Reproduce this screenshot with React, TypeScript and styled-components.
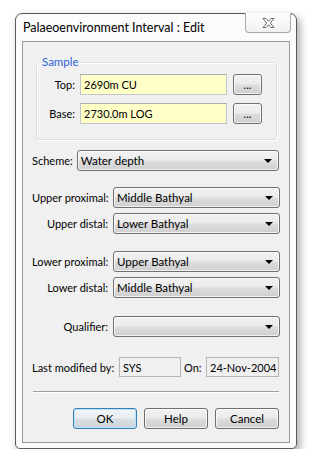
import { Fragment } from 'react';
import styled, { createGlobalStyle, css } from 'styled-components';

const GlobalStyle = createGlobalStyle`
  html, body {
    margin: 0;
    padding: 0;
    background: #ffffff;
  }
  body {
    font-family: Lato, "Liberation Sans", sans-serif;
    font-size: 11px;
    color: #000000;
  }
`;

const Window = styled.div`
  position: relative;
  box-sizing: border-box;
  width: 282px;
  height: 436px;
  margin: 13px 0 0 15px;
  border: 1px solid #5a5a5a;
  border-radius: 7px 7px 5px 5px;
  background: #fbfbfb;
  box-shadow: 3px 4px 9px rgba(0, 0, 0, 0.35);
  display: flex;
  flex-direction: column;
`;

const TitleBar = styled.div`
  height: 27px;
  display: flex;
  align-items: center;
  padding-left: 7px;
  font-size: 12.5px;
  color: #000;
`;

const CloseButton = styled.div`
  position: absolute;
  top: -1px;
  right: 5px;
  width: 46px;
  height: 20px;
  box-sizing: border-box;
  border: 1px solid #a8a8a8;
  border-top: none;
  border-radius: 0 0 4px 4px;
  background: linear-gradient(#fdfdfd, #f1f1f1);
  display: flex;
  align-items: center;
  justify-content: center;
`;

const Client = styled.div`
  flex: 1;
  margin: 0 6px 5px 6px;
  border: 1px solid #979797;
  background: #f0f0f0;
  padding: 0 10px 0 9px;
  display: flex;
  flex-direction: column;
`;

const GroupBox = styled.div`
  position: relative;
  margin: 20px 2px 0 4px;
  border: 1px solid #d5dfe5;
  border-radius: 3px;
  box-shadow: inset 1px 1px 0 #ffffff, 1px 1px 0 #ffffff;
  padding: 11px 0 15px 0;
  display: grid;
  grid-template-columns: 38px 147px 30px;
  column-gap: 5px;
  row-gap: 8px;
  align-items: center;
`;

const GroupCaption = styled.span`
  position: absolute;
  top: -8px;
  left: 4px;
  padding: 0 1px;
  background: #f0f0f0;
  color: #2f62d8;
  font-size: 11.5px;
`;

const Label = styled.label`
  white-space: nowrap;
  text-align: right;
`;

const fieldBase = css`
  box-sizing: border-box;
  height: 21px;
  display: flex;
  align-items: center;
  padding-left: 3px;
  white-space: nowrap;
  overflow: hidden;
`;

const TextField = styled.div<{ $readOnly?: boolean }>`
  ${fieldBase}
  border: 1px solid #c4c6cc;
  border-top-color: #abadb3;
  background: ${({ $readOnly }) => ($readOnly ? '#f0f0f0' : '#ffffc8')};
  ${({ $readOnly }) =>
    $readOnly &&
    css`
      height: 20px;
      border-color: #b5b5b5;
    `}
`;

const buttonFace = css`
  box-sizing: border-box;
  border: 1px solid #707070;
  border-radius: 3px;
  background: linear-gradient(#f2f2f2 0%, #ebebeb 48%, #dddddd 52%, #cfcfcf 100%);
  box-shadow: inset 0 0 0 1px rgba(255, 255, 255, 0.7);
`;

const EllipsisButton = styled.div`
  ${buttonFace}
  height: 21px;
  margin-left: 1px;
  display: flex;
  align-items: center;
  justify-content: center;
  font-size: 11px;
  padding-bottom: 1px;
`;

const Combo = styled.div`
  ${buttonFace}
  ${fieldBase}
  position: relative;
  padding-right: 20px;
  font-size: 11.5px;

  &::after {
    content: '';
    position: absolute;
    right: 6px;
    top: 8px;
    border-left: 4px solid transparent;
    border-right: 4px solid transparent;
    border-top: 4px solid #000;
  }
`;

const SchemeRow = styled.div`
  margin-top: 10px;
  display: grid;
  grid-template-columns: auto 1fr;
  column-gap: 4px;
  align-items: center;
`;

const FormGrid = styled.div<{ $top: number }>`
  margin-top: ${({ $top }) => $top}px;
  display: grid;
  grid-template-columns: 76px 167px;
  column-gap: 5px;
  row-gap: 5px;
  align-items: center;
`;

const ModifiedRow = styled.div`
  margin-top: 20px;
  display: grid;
  grid-template-columns: 87px 62px 25px 1fr;
  align-items: center;
`;

const OnLabel = styled.span`
  padding-left: 3px;
`;

const Separator = styled.div`
  margin-top: 14px;
  margin-left: 1px;
  height: 1px;
  background: #a0a0a0;
  border-bottom: 1px solid #ffffff;
`;

const ButtonBar = styled.div`
  margin-top: 15px;
  display: flex;
  justify-content: flex-end;
  gap: 7px;
`;

const DialogButton = styled.div<{ $default?: boolean }>`
  ${buttonFace}
  width: 64px;
  height: 21px;
  display: flex;
  align-items: center;
  justify-content: center;
  font-size: 11.5px;
  ${({ $default }) =>
    $default &&
    css`
      border-color: #3c7fb1;
      box-shadow: inset 0 0 0 1px #b6e1fb;
      background: linear-gradient(#f2f4f6 0%, #eaeef1 48%, #d9e0e5 52%, #cdd5db 100%);
    `}
`;

const CloseGlyph = () => (
  <svg width="15" height="12" viewBox="0 0 15 12">
    <path
      d="M2 1.5 H5 L7.5 4.2 L10 1.5 H13 L9.3 6 L13 10.5 H10 L7.5 7.8 L5 10.5 H2 L5.7 6 Z"
      fill="#ffffff"
      stroke="#6b6b6b"
      strokeWidth="1"
      strokeLinejoin="round"
    />
  </svg>
);

const intervalRows = [
  [
    { label: 'Upper proximal:', value: 'Middle Bathyal' },
    { label: 'Upper distal:', value: 'Lower Bathyal' },
  ],
  [
    { label: 'Lower proximal:', value: 'Upper Bathyal' },
    { label: 'Lower distal:', value: 'Middle Bathyal' },
  ],
];

const App = () => {
  return (
    <>
      <GlobalStyle />
      <Window>
        <TitleBar>Palaeoenvironment Interval : Edit</TitleBar>
        <CloseButton>
          <CloseGlyph />
        </CloseButton>
        <Client>
          <GroupBox>
            <GroupCaption>Sample</GroupCaption>
            <Label>Top:</Label>
            <TextField>2690m CU</TextField>
            <EllipsisButton>...</EllipsisButton>
            <Label>Base:</Label>
            <TextField>2730.0m LOG</TextField>
            <EllipsisButton>...</EllipsisButton>
          </GroupBox>

          <SchemeRow>
            <Label>Scheme:</Label>
            <Combo>Water depth</Combo>
          </SchemeRow>

          {intervalRows.map((rows, i) => (
            <FormGrid key={i} $top={i === 0 ? 16 : 17}>
              {rows.map((row) => (
                <Fragment key={row.label}>
                  <Label>{row.label}</Label>
                  <Combo>{row.value}</Combo>
                </Fragment>
              ))}
            </FormGrid>
          ))}

          <FormGrid $top={18}>
            <Label>Qualifier:</Label>
            <Combo />
          </FormGrid>

          <ModifiedRow>
            <span>Last modified by:</span>
            <TextField $readOnly>SYS</TextField>
            <OnLabel>On:</OnLabel>
            <TextField $readOnly>24-Nov-2004</TextField>
          </ModifiedRow>

          <Separator />

          <ButtonBar>
            <DialogButton $default>OK</DialogButton>
            <DialogButton>Help</DialogButton>
            <DialogButton>Cancel</DialogButton>
          </ButtonBar>
        </Client>
      </Window>
    </>
  );
};

export default App;
